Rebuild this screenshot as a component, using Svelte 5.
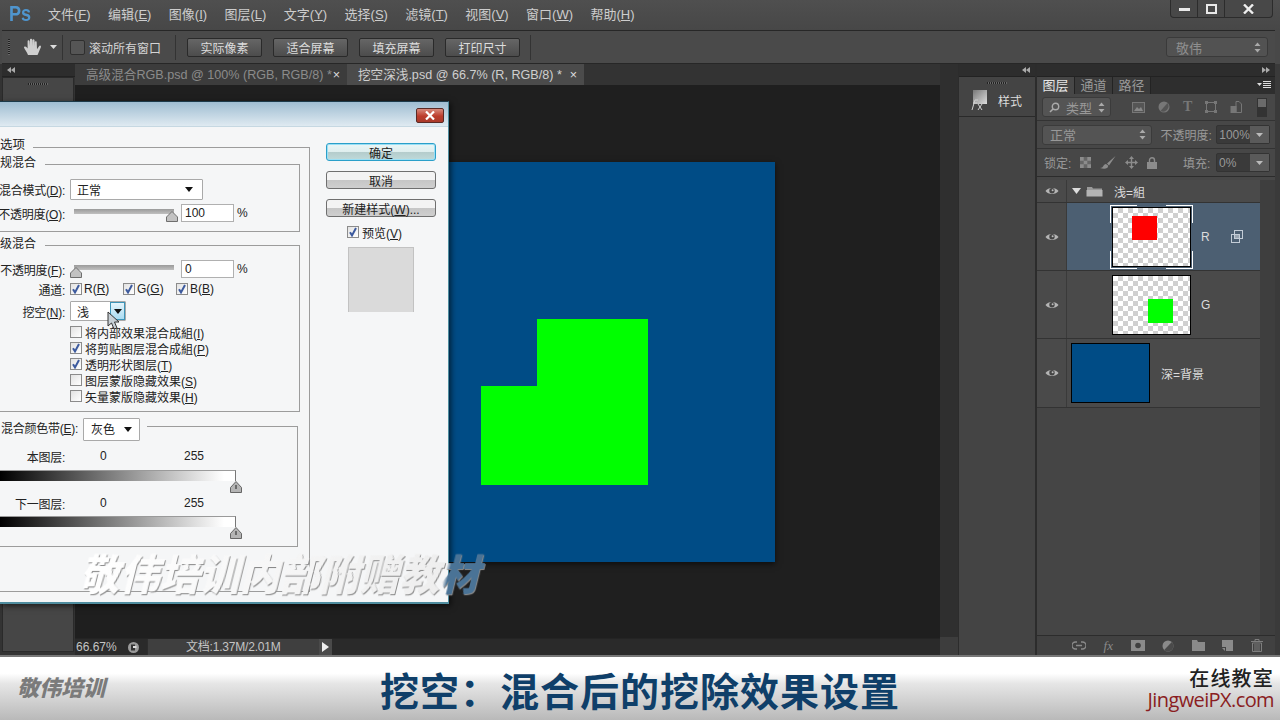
<script>
  const menus = [['文件','F'],['编辑','E'],['图像','I'],['图层','L'],['文字','Y'],['选择','S'],['滤镜','T'],['视图','V'],['窗口','W'],['帮助','H']];
  const optButtons = ['实际像素','适合屏幕','填充屏幕','打印尺寸'];
  const blendChecks = [
    ['将内部效果混合成組','I',false],
    ['将剪贴图层混合成組','P',true],
    ['透明形状图层','T',true],
    ['图层蒙版隐藏效果','S',false],
    ['矢量蒙版隐藏效果','H',false]
  ];
  const channels = ['R','G','B'];
</script>

{#snippet eye()}
  <svg class="eye" width="14" height="10" viewBox="0 0 14 10"><path d="M0.5 5C3 1 11 1 13.5 5C11 9 3 9 0.5 5Z" fill="#b5b5b5"/><circle cx="7" cy="4.8" r="2.7" fill="#444"/><circle cx="7.6" cy="4.2" r="1" fill="#bbb"/></svg>
{/snippet}
{#snippet check(on)}
  <span class="ck">{#if on}<svg width="10" height="10" viewBox="0 0 10 10"><path d="M2 5.2L4 8.4L8 1" fill="none" stroke="#3c5a9e" stroke-width="2"/></svg>{/if}</span>
{/snippet}
{#snippet handle()}
  <svg width="12" height="11" viewBox="0 0 12 11"><path d="M6 0.5L11.5 6V10.5H0.5V6Z" fill="#c2c2c2" stroke="#6e6e6e"/></svg>
{/snippet}
{#snippet gHandle()}
  <svg width="12" height="12" viewBox="0 0 12 12"><path d="M6 0.5L11.5 6.5V11.5H0.5V6.5Z" fill="#b4b4b4" stroke="#666"/><path d="M6 4V8" stroke="#222"/></svg>
{/snippet}
{#snippet updown()}
  <svg class="ud" width="7" height="11" viewBox="0 0 7 11"><path d="M3.5 0.5L6.5 4H0.5ZM3.5 10.5L0.5 7H6.5Z" fill="#aaa"/></svg>
{/snippet}

<div class="app">
  <header class="menubar">
    <span class="ps">Ps</span>
    <nav class="menus">
      {#each menus as m}<span>{m[0]}(<u>{m[1]}</u>)</span>{/each}
    </nav>
    <div class="winctl">
      <span><svg width="11" height="4" viewBox="0 0 11 4"><rect width="11" height="3" y="1" fill="#e8e8e8"/></svg></span>
      <span><svg width="11" height="10" viewBox="0 0 11 10"><rect x="1" y="1" width="9" height="8" fill="none" stroke="#e8e8e8" stroke-width="2"/></svg></span>
      <span class="x"><svg width="11" height="10" viewBox="0 0 11 10"><path d="M1 0.5L10 9.5M10 0.5L1 9.5" stroke="#eee" stroke-width="2.4"/></svg></span>
    </div>
  </header>

  <div class="options">
    <span class="grip"></span>
    <svg class="hand" width="20" height="20" viewBox="0 0 20 20"><path d="M5 18C4 15 1.5 12 1 10.5C1 9.3 2.6 9 3.6 10.3L4.6 11.5V4.2C4.6 3 6.5 3 6.6 4.2L7 9V2.6C7 1.4 9 1.4 9.1 2.6L9.4 9V3.2C9.5 2 11.4 2 11.5 3.2L11.8 9.5V5C11.9 4 13.7 4 13.7 5.2L14 12C15 11 16 8.5 17 8.4C18 8.4 18.2 9.4 17.8 10.4C16.5 13 15.5 16 14.5 18Z" fill="#cfcfcf"/></svg>
    <svg class="caret" width="7" height="4" viewBox="0 0 7 4"><path d="M0 0H7L3.5 4Z" fill="#ddd"/></svg>
    <i class="vsep s1"></i>
    <span class="optck"></span>
    <span class="optlabel">滚动所有窗口</span>
    <i class="vsep s2"></i>
    <div class="optbtns">
      {#each optButtons as b}<button>{b}</button>{/each}
    </div>
    <i class="vsep s3"></i>
    <span class="workspace">敬伟{@render updown()}</span>
  </div>

  <div class="work">
    <aside class="tools">
      <div class="strip"><svg width="8" height="6" viewBox="0 0 8 6"><path d="M4 0V6L0 3ZM8 0V6L4 3Z" fill="#aaa"/></svg></div>
      <div class="toolbody"><span class="tgrip"></span></div>
    </aside>

    <main class="docs">
      <div class="tabs">
        <div class="tab t1">高级混合RGB.psd @ 100% (RGB, RGB/8) *<b>×</b></div>
        <div class="tab t2">挖空深浅.psd @ 66.7% (R, RGB/8) *<b>×</b></div>
        <div class="tabrest"></div>
      </div>
      <div class="canvas">
        <svg class="doc" width="533" height="400" viewBox="0 0 533 400">
          <rect width="533" height="400" fill="#004c86"/>
          <path d="M295 157H406V323H239V224H295Z" fill="#00ff00"/>
        </svg>
      </div>
      <div class="status">
        <span class="zoomv">66.67%</span>
        <span class="sicon"><svg width="11" height="11" viewBox="0 0 11 11"><circle cx="5.5" cy="5.5" r="5.5" fill="#9a9a9a"/><path d="M3 2.5H7V8.5H3Z" fill="#333"/><path d="M5 4H8.5V6H5Z" fill="#ddd"/></svg></span>
        <span class="sdoc">文档:1.37M/2.01M</span>
        <span class="sarrow"><svg width="7" height="10" viewBox="0 0 7 10"><path d="M0 0L7 5L0 10Z" fill="#eee"/></svg></span>
      </div>
    </main>

    <div class="vscroll"><span></span></div>

    <aside class="dock1">
      <div class="strip end"><svg width="8" height="6" viewBox="0 0 8 6"><path d="M4 0V6L0 3ZM8 0V6L4 3Z" fill="#aaa"/></svg></div>
      <span class="pgrip"></span>
      <div class="stylehead">
        <svg width="18" height="22" viewBox="0 0 18 22"><defs><linearGradient id="fxg" x1="0" y1="0" x2="1" y2="1"><stop offset="0" stop-color="#777"/><stop offset="1" stop-color="#ddd"/></linearGradient></defs><rect x="3" y="1" width="14" height="14" fill="url(#fxg)"/><path d="M2 21L5 11H8M3 14H7M8 15L12 21M12 15L8 21" fill="none" stroke="#cfcfcf" stroke-width="1"/></svg>
        <span>样式</span>
      </div>
    </aside>

    <aside class="dock2">
      <div class="strip end"><svg width="8" height="6" viewBox="0 0 8 6"><path d="M0 0V6L4 3ZM4 0V6L8 3Z" fill="#aaa"/></svg></div>
      <div class="ptabs">
        <span class="on">图层</span><span>通道</span><span>路径</span>
        <svg class="pmenu" width="14" height="8" viewBox="0 0 14 8"><path d="M0 2H5L2.5 5Z" fill="#ddd"/><path d="M6 .5H14M6 2.5H14M6 4.500H14M6 6.500H14" stroke="#ddd"/></svg>
      </div>
      <div class="prow filter">
        <span class="psel s-type"><svg width="11" height="11" viewBox="0 0 11 11"><circle cx="6.500" cy="4.500" r="3.200" fill="none" stroke="#aaa" stroke-width="1.400"/><path d="M4 7L1 10" stroke="#aaa" stroke-width="1.600"/></svg>类型{@render updown()}</span>
        <div class="ficons">
          <svg width="13" height="11" viewBox="0 0 13 11"><rect x=".5" y=".5" width="12" height="10" fill="#555" stroke="#777"/><path d="M2 9L5 5L7 7L9 5L11 9Z" fill="#888"/></svg>
          <svg width="12" height="12" viewBox="0 0 12 12"><circle cx="6" cy="6" r="5.500" fill="#777"/><path d="M9.500 2L2.500 10A5.500 5.500 0 0 0 9.500 2Z" fill="#555"/></svg>
          <span class="ft">T</span>
          <svg width="12" height="12" viewBox="0 0 12 12"><rect x="1.500" y="1.500" width="9" height="9" fill="none" stroke="#777"/><path d="M0 0h3v3H0zM9 0h3v3H9zM0 9h3v3H0zM9 9h3v3H9z" fill="#777"/></svg>
          <svg width="12" height="12" viewBox="0 0 12 12"><path d="M6 .5H9L11.500 3V11.500H6Z" fill="none" stroke="#777"/><rect x=".5" y="5" width="6" height="7" fill="#777"/></svg>
        </div>
        <span class="ftoggle"></span>
      </div>
      <div class="prow mode">
        <span class="psel s-mode">正常{@render updown()}</span>
        <span class="plabel">不透明度:</span>
        <span class="pnum">100%<em><svg width="7" height="4" viewBox="0 0 7 4"><path d="M0 0H7L3.500 4Z" fill="#bbb"/></svg></em></span>
      </div>
      <div class="prow lock">
        <span class="lk">锁定:</span>
        <div class="licons">
          <svg width="11" height="11" viewBox="0 0 11 11"><rect width="11" height="11" fill="#666"/><path d="M0 0h3.700v3.700H0zM7.300 0H11v3.700H7.300zM3.700 3.700h3.600v3.600H3.700zM0 7.300h3.700V11H0zM7.300 7.300H11V11H7.300z" fill="#8c8c8c"/></svg>
          <svg width="16" height="13" viewBox="0 0 16 13"><path d="M15.500 0L7 7.500L9 9.500ZM6 8C3 8 4 12 0 12C4 13.500 9 13 8 9.500Z" fill="#8c8c8c"/></svg>
          <svg width="13" height="13" viewBox="0 0 13 13"><path d="M6.500 0L9 3H7.200V5.800H10V4L13 6.500L10 9V7.200H7.200V10H9L6.500 13L4 10H5.800V7.200H3V9L0 6.500L3 4V5.800H5.800V3H4Z" fill="#8c8c8c"/></svg>
          <svg width="10" height="12" viewBox="0 0 10 12"><path d="M2.500 5V3.200A2.500 2.500 0 0 1 7.500 3.200V5" fill="none" stroke="#8c8c8c" stroke-width="1.400"/><rect y="5" width="10" height="7" fill="#8c8c8c"/></svg>
        </div>
        <span class="plabel fill">填充:</span>
        <span class="pnum">0%<em><svg width="7" height="4" viewBox="0 0 7 4"><path d="M0 0H7L3.500 4Z" fill="#bbb"/></svg></em></span>
      </div>

      <div class="listwrap">
        <div class="list">
          <div class="lrow group">
            <span class="eyec">{@render eye()}</span>
            <svg class="gtri" width="9" height="6" viewBox="0 0 9 6"><path d="M0 0H9L4.500 6Z" fill="#ddd"/></svg>
            <svg class="gfolder" width="17" height="12" viewBox="0 0 17 12"><path d="M1 2H6L7 3.500H16V5H1Z" fill="#999"/><path d="M0.500 5H16.500V11.500H0.500Z" fill="#b4b4b4"/></svg>
            <span class="gname">浅=組</span>
          </div>
          <div class="lrow sel">
            <span class="eyec">{@render eye()}</span>
            <div class="thumbframe"><div class="thumb"><i class="red"></i></div></div>
            <span class="lname rn">R</span>
            <svg class="clip" width="12" height="13" viewBox="0 0 12 13"><rect x="3.500" y=".5" width="8" height="8" fill="none" stroke="#c3ccd6"/><rect x=".5" y="4.500" width="8" height="8" fill="none" stroke="#c3ccd6"/><rect x="4" y="5" width="4" height="3" fill="#9aa6b2"/></svg>
          </div>
          <div class="lrow">
            <span class="eyec">{@render eye()}</span>
            <div class="thumb gth"><i class="green"></i></div>
            <span class="lname gn">G</span>
          </div>
          <div class="lrow bg">
            <span class="eyec">{@render eye()}</span>
            <div class="thumb blue"></div>
            <span class="lname bn">深=背景</span>
          </div>
        </div>
        <div class="lscroll"></div>
      </div>

      <div class="pfoot">
        <svg width="14" height="9" viewBox="0 0 14 9"><path d="M5 1H3.500a3.500 3.500 0 0 0 0 7H5M9 1h1.500a3.500 3.500 0 0 1 0 7H9M4 4.500H10" fill="none" stroke="#8a8a8a" stroke-width="1.400"/></svg>
        <span class="fxf">fx</span>
        <svg width="14" height="11" viewBox="0 0 14 11"><rect width="14" height="11" fill="#8a8a8a"/><circle cx="7" cy="5.500" r="2.800" fill="#3f3f3f"/></svg>
        <svg width="12" height="12" viewBox="0 0 12 12"><circle cx="6" cy="6" r="5.500" fill="#8a8a8a"/><path d="M9.800 2L2.200 10A5.500 5.500 0 0 0 9.800 2Z" fill="#4a4a4a"/></svg>
        <svg width="13" height="11" viewBox="0 0 13 11"><path d="M0 0H5L6 2H13V11H0Z" fill="#8a8a8a"/></svg>
        <svg width="11" height="11" viewBox="0 0 11 11"><path d="M0 0H11V11H4V7H0Z" fill="#8a8a8a"/><path d="M0 8H3V11Z" fill="#8a8a8a"/></svg>
        <svg width="12" height="13" viewBox="0 0 12 13"><path d="M0 2.500H12M4 2V.5H8V2M1.500 4H10.500V12.500H1.500ZM4 5V12M6 5V12M8 5V12" fill="none" stroke="#7e7e7e"/></svg>
      </div>
    </aside>
  </div>

  <footer class="banner">
    <span class="blogo">敬伟培训</span>
    <h1>挖空：混合后的挖除效果设置</h1>
    <div class="bright"><span class="b1">在线教室</span><span class="b2">JingweiPX.com</span></div>
  </footer>

  <section class="dialog">
    <div class="dtitle"><span class="dclose"><svg width="10" height="9" viewBox="0 0 10 9"><path d="M1 .5L9 8.500M9 .5L1 8.500" stroke="#fff" stroke-width="2.200"/></svg></span></div>
    <div class="dbody">
      <div class="dleft">
        <div class="outer">
          <div class="legend lg0">选项</div>
          <div class="grp g1">
            <div class="legend lg1">规混合</div>
            <div class="row r1">
              <span class="lbl">混合模式(<u>D</u>):</span>
              <span class="sel-w sw1">正常<svg width="8" height="5" viewBox="0 0 8 5"><path d="M0 0H8L4 5Z" fill="#111"/></svg></span>
            </div>
            <div class="row r2">
              <span class="lbl">不透明度(<u>O</u>):</span>
              <span class="slider end">{@render handle()}</span>
              <span class="numbox">100</span><span class="pct">%</span>
            </div>
          </div>
          <div class="grp g2">
            <div class="legend lg1">级混合</div>
            <div class="row r2 r3">
              <span class="lbl">不透明度(<u>F</u>):</span>
              <span class="slider start">{@render handle()}</span>
              <span class="numbox">0</span><span class="pct">%</span>
            </div>
            <div class="row r4">
              <span class="lbl">通道:</span>
              {#each channels as c}
                <span class="chan">{@render check(true)}<span>{c}(<u>{c}</u>)</span></span>
              {/each}
            </div>
            <div class="row r5">
              <span class="lbl">挖空(<u>N</u>):</span>
              <span class="sel-w sw2">浅<span class="dropbtn"><svg width="8" height="5" viewBox="0 0 8 5"><path d="M0 0H8L4 5Z" fill="#111"/></svg></span></span>
            </div>
            <div class="checks">
              {#each blendChecks as c}
                <div class="ckrow">{@render check(c[2])}<span>{c[0]}(<u>{c[1]}</u>)</span></div>
              {/each}
            </div>
          </div>
          <div class="grp g3">
            <div class="legend lg3">
              <span class="lbl wide">混合颜色带(<u>E</u>):</span>
              <span class="sel-w sw3">灰色<svg width="8" height="5" viewBox="0 0 8 5"><path d="M0 0H8L4 5Z" fill="#111"/></svg></span>
            </div>
            <div class="row r6"><span class="lbl">本图层:</span><span class="v0">0</span><span class="v255">255</span></div>
            <div class="gbar"></div>
            <div class="gh">{@render gHandle()}</div>
            <div class="row r7"><span class="lbl">下一图层:</span><span class="v0">0</span><span class="v255">255</span></div>
            <div class="gbar"></div>
            <div class="gh">{@render gHandle()}</div>
          </div>
        </div>
      </div>
      <div class="dright">
        <button class="dbtn primary">确定</button>
        <button class="dbtn">取消</button>
        <button class="dbtn">新建样式(<u>W</u>)...</button>
        <div class="preview">{@render check(true)}<span>预览(<u>V</u>)</span></div>
        <div class="swatch"></div>
      </div>
    </div>
  </section>

  <svg class="cursor" width="14" height="20" viewBox="0 0 14 20"><path d="M1 1V15L4.500 12L7 18L10 17L7.500 11H12Z" fill="#c8d0d6" stroke="#333"/></svg>
  <div class="wm">敬伟培训内部附赠教材</div>
</div>

<style>
  :global(body){margin:0;background:#222;}
  .app{position:relative;width:1280px;height:720px;overflow:hidden;display:flex;flex-direction:column;background:#484848;color:#d0d0d0;font:12px "Liberation Sans","Noto Sans CJK SC",sans-serif;}
  u{text-decoration:underline;}

  .menubar{height:30px;flex:none;display:flex;align-items:flex-start;background:linear-gradient(#4f4f4f,#474747);}
  .ps{margin:0 0 0 9px;width:39px;font:bold 22px/27px "Liberation Sans",sans-serif;color:#4f95ce;transform:scaleX(.82);transform-origin:left;}
  .menus{display:flex;gap:17.4px;padding-top:6px;font-size:13px;line-height:17px;color:#cdcdcd;}
  .winctl{margin-left:auto;margin-right:7px;display:flex;height:17px;border:1px solid #2c2c2c;border-top:0;border-radius:0 0 4px 4px;background:#484848;}
  .winctl span{width:26px;display:flex;align-items:center;justify-content:center;border-right:1px solid #2c2c2c;}
  .winctl .x{width:47px;border:0;}

  .options{height:34px;flex:none;display:flex;align-items:center;margin:0 5px 0 2px;border-top:1px solid #272727;border-bottom:1px solid #272727;background:#4a4a4a;box-sizing:border-box;}
  .grip{width:2px;height:16px;margin-left:6px;background:repeating-linear-gradient(#222 0 1px,#666 1px 2px);}
  .hand{margin-left:13px;}
  .caret{margin-left:7px;}
  .vsep{width:1px;height:25px;background:#333;}
  .s1{margin-left:5px;}
  .optck{width:13px;height:13px;margin-left:7px;border:1px solid #2f2f2f;border-radius:2px;background:#555;}
  .optlabel{margin-left:4px;width:71px;font-size:12px;color:#d5d5d5;white-space:nowrap;}
  .s2{margin-left:15px;}
  .optbtns{display:flex;gap:11px;margin-left:11px;}
  .optbtns button{width:75px;height:19px;padding:0;font:12px "Liberation Sans","Noto Sans CJK SC",sans-serif;color:#ddd;border:1px solid #2a2a2a;border-radius:2px;background:linear-gradient(#666,#4c4c4c);}
  .s3{margin-left:10px;}
  .workspace{margin-left:auto;margin-right:7px;width:102px;height:20px;box-sizing:border-box;padding:0 6px 0 9px;display:flex;align-items:center;justify-content:space-between;color:#8f8f8f;font-size:13px;border:1px solid #3a3a3a;border-radius:3px;background:#525252;}

  .work{flex:1;min-height:0;display:flex;border-bottom:2px solid #777;background:#3a3a3a;}
  .strip{height:12px;display:flex;align-items:center;padding:0 5px;background:#2d2d2d;border-bottom:1px solid #222;flex:none;}
  .strip.end{justify-content:flex-end;}
  .tools{width:75px;flex:none;display:flex;flex-direction:column;padding-left:2px;box-sizing:border-box;background:#333;}
  .toolbody{flex:1;margin-right:1px;margin-bottom:3px;background:#464646;border:1px solid #2a2a2a;display:flex;justify-content:center;}
  .tgrip{width:20px;height:2px;margin:5px 0 0;background:repeating-linear-gradient(90deg,#222 0 1px,#666 1px 2px);}

  .docs{flex:1;min-width:0;display:flex;flex-direction:column;background:#1f1f1f;}
  .tabs{height:21px;flex:none;display:flex;background:#2e2e2e;}
  .tab{box-sizing:border-box;line-height:22px;padding-left:11px;font-size:12.6px;white-space:nowrap;display:flex;justify-content:space-between;padding-right:7px;}
  .tab b{font-weight:400;color:#ddd;}
  .t1{width:272px;background:#3c3c3c;color:#8b8b8b;}
  .t2{width:237px;background:#4b4b4b;color:#cfcfcf;}
  .tabrest{flex:1;background:#333;}
  .canvas{flex:1;min-height:0;display:flex;align-items:center;justify-content:center;padding-left:1px;background:#1f1f1f;}
  .doc{display:block;box-shadow:0 2px 6px rgba(0,0,0,.6);}
  .status{height:16px;flex:none;display:flex;align-items:center;background:#2a2a2a;border-top:1px solid #242424;font-size:12px;color:#c4c4c4;}
  .zoomv{width:52px;padding-left:1px;}
  .sicon{width:19px;height:100%;display:flex;align-items:center;}
  .sdoc{width:172px;height:100%;box-sizing:border-box;padding-left:38px;background:#3f3f3f;line-height:16px;border-left:1px solid #2d2d2d;letter-spacing:-.2px;}
  .sarrow{width:13px;height:100%;background:#4a4a4a;display:flex;align-items:center;justify-content:center;}

  .vscroll{width:18px;flex:none;display:flex;align-items:flex-end;background:#2f2f2f;}
  .vscroll span{width:100%;height:18px;background:#3d3d3d;}

  .dock1{width:79px;flex:none;display:flex;flex-direction:column;border-right:2px solid #2c2c2c;box-sizing:border-box;background:#444;border-left:1px solid #2c2c2c;}
  .pgrip{width:20px;height:2px;margin:5px auto 0;flex:none;background:repeating-linear-gradient(90deg,#222 0 1px,#666 1px 2px);}
  .stylehead{height:33px;box-sizing:border-box;border-bottom:1px solid #2a2a2a;display:flex;align-items:center;padding:0 0 0 11px;gap:10px;color:#ddd;font-size:12px;}

  .dock2{width:238px;flex:none;margin-right:5px;display:flex;flex-direction:column;background:#474747;}
  .ptabs{height:17px;flex:none;display:flex;align-items:stretch;background:#2e2e2e;}
  .ptabs span{width:37px;text-align:center;font-size:13px;line-height:18px;color:#999;border-right:1px solid #232323;background:#3a3a3a;}
  .ptabs .on{background:#474747;color:#e6e6e6;}
  .pmenu{margin:4px 4px 0 auto;}
  .prow{flex:none;display:flex;align-items:center;box-sizing:border-box;padding:0 5px;border-bottom:1px solid #333;}
  .filter{height:27px;}
  .mode{height:28px;}
  .lock{height:28px;border-bottom:1px solid #2c2c2c;}
  .psel{height:20px;box-sizing:border-box;display:flex;align-items:center;background:#545454;border:1px solid #3b3b3b;border-radius:3px;padding:0 5px 0 7px;font-size:13px;color:#999;}
  .psel .ud{margin-left:auto;}
  .s-type{width:69px;gap:6px;padding-left:6px;}
  .s-mode{width:110px;}
  .ficons{margin-left:21px;display:flex;align-items:center;gap:13px;}
  .ft{font:bold 14px "Liberation Serif",serif;color:#777;line-height:14px;}
  .ftoggle{margin-left:auto;margin-right:3px;width:8px;height:17px;background:linear-gradient(#6a6a6a 50%,#333 50%);border:1px solid #333;}
  .plabel{margin-left:9px;font-size:12px;color:#999;white-space:nowrap;width:56px;}
  .pnum{margin-left:auto;margin-right:0;width:54px;height:19px;box-sizing:border-box;display:flex;align-items:center;justify-content:space-between;padding-left:2px;background:#3a3a3a;border:1px solid #333;border-radius:2px;color:#999;font-size:12px;}
  .pnum em{width:19px;height:100%;display:flex;align-items:center;justify-content:center;background:#5a5a5a;}
  .lk{color:#999;width:30px;margin-left:2px;font-size:12px;white-space:nowrap;}
  .licons{display:flex;align-items:center;gap:9px;margin-left:6px;}
  .fill{width:28px;margin-left:auto;margin-right:5px;}
  .lock .pnum{margin-left:0;}

  .listwrap{flex:1;min-height:0;display:flex;margin-top:3px;}
  .list{width:223px;flex:none;background:#454545;}
  .lscroll{flex:1;background:#3e3e3e;}
  .lrow{height:68px;box-sizing:border-box;display:flex;align-items:center;background:#4a4a4a;border-bottom:1px solid #333;color:#dcdcdc;}
  .lrow.group{height:23px;}
  .lrow.bg{height:69px;}
  .eyec{width:30px;height:100%;flex:none;box-sizing:border-box;display:flex;align-items:center;justify-content:center;border-right:1px solid #3a3a3a;background:#4a4a4a;}
  .gtri{margin-left:5px;}
  .gfolder{margin-left:5px;}
  .gname{margin-left:11px;}
  .sel{background:#4c5f72;}
  .thumb{width:79px;height:60px;box-sizing:border-box;border:1px solid #000;flex:none;background:repeating-conic-gradient(#d0d0d0 0 25%,#fff 0 50%) 0 0/10px 10px;display:flex;}
  .thumbframe{margin-left:43px;padding:2px;flex:none;background:
    linear-gradient(#fff,#fff) 0 0/27px 1px,linear-gradient(#fff,#fff) 100% 0/27px 1px,
    linear-gradient(#fff,#fff) 0 100%/27px 1px,linear-gradient(#fff,#fff) 100% 100%/27px 1px,
    linear-gradient(#fff,#fff) 0 0/1px 18px,linear-gradient(#fff,#fff) 100% 0/1px 18px,
    linear-gradient(#fff,#fff) 0 100%/1px 18px,linear-gradient(#fff,#fff) 100% 100%/1px 18px;background-repeat:no-repeat;}
  .red{width:25px;height:24px;margin:8px 0 0 19px;background:#f00;}
  .gth{margin-left:45px;}
  .green{width:25px;height:24px;margin:23px 0 0 35px;background:#0f0;}
  .blue{margin-left:4px;background:#004c86;}
  .lname{font-size:12px;}
  .rn{margin-left:8px;}
  .gn{margin-left:10px;}
  .bn{margin-left:11px;}
  .clip{margin-left:21px;}
  .pfoot{height:19px;flex:none;display:flex;align-items:center;justify-content:space-between;padding:0 12px 0 35px;background:#414141;border-top:1px solid #2c2c2c;}
  .fxf{font:italic 13px "Liberation Serif",serif;color:#8a8a8a;}

  .banner{height:63px;flex:none;box-sizing:border-box;display:flex;align-items:center;background:linear-gradient(#fff 0,#fff 26%,#e6e6e6 42%,#b9b9b9 100%);}
  .blogo{width:376px;padding-left:17px;box-sizing:border-box;font:italic 900 22px "Noto Sans CJK SC",sans-serif;color:#7b7b7b;margin-top:-5px;white-space:nowrap;}
  h1{margin:2px 0 0 4px;font:700 39px/1 "Noto Sans CJK SC",sans-serif;color:#0f3f69;letter-spacing:1px;white-space:nowrap;}
  .bright{margin-left:auto;margin-right:6px;display:flex;flex-direction:column;align-items:flex-end;}
  .b1{font:500 20px/22px "Noto Sans CJK SC",sans-serif;letter-spacing:1.2px;color:#222;}
  .b2{font:20px/21px "Open Sans",sans-serif;color:#8a1d22;letter-spacing:-.6px;}

  .dialog{position:absolute;left:0;top:101px;width:449px;height:503px;box-sizing:border-box;overflow:hidden;display:flex;flex-direction:column;background:#f5f6f7;border-top:1px solid #1c3a4a;border-right:1px solid #4f8d9f;border-bottom:2px solid #4f8d9f;color:#222;font-size:12px;box-shadow:2px 2px 6px rgba(0,0,0,.6);}
  .dtitle{height:25px;flex:none;box-sizing:border-box;display:flex;justify-content:flex-end;padding:6px 4px 0 0;background:linear-gradient(#9fbdd2,#dfeaf1);border-bottom:1px solid #c6d8e2;}
  .dclose{width:28px;height:15px;display:flex;align-items:center;justify-content:center;box-sizing:border-box;border:1px solid #5a2a25;border-radius:2px;background:linear-gradient(#d88a7c,#bc3c2c 55%,#a93a2a);}
  .dbody{flex:1;display:flex;min-height:0;}
  .dleft{width:360px;margin-left:-50px;flex:none;}
  .dright{width:110px;margin:16px 0 0 16px;display:flex;flex-direction:column;flex:none;}

  .outer{margin-top:20px;height:445px;box-sizing:border-box;border:1px solid #9c9c9c;}
  .legend{width:fit-content;height:16px;line-height:16px;background:#f5f6f7;white-space:nowrap;}
  .lg0{margin:-11px 0 0 49px;padding-right:8px;font-size:12.5px;}
  .lg1{margin:-10px 0 0 38px;padding-right:9px;font-size:12px;}
  .grp{box-sizing:border-box;margin-left:10px;border:1px solid #9c9c9c;width:339px;}
  .g1{margin-top:11px;height:68px;}
  .g2{margin-top:13px;height:167px;}
  .g3{margin-top:14px;height:121px;width:337px;}
  .lg3{display:flex;height:23px;margin:-9px 0 0 -1px;padding-right:7px;align-items:stretch;}
  .row{display:flex;align-items:center;white-space:nowrap;}
  .lbl{width:103px;flex:none;margin-right:5px;text-align:right;letter-spacing:-.25px;}
  .wide{width:117px;line-height:23px;letter-spacing:-.25px;}
  .r1{margin-top:8px;height:21px;}
  .r2{margin-top:4px;height:18px;}
  .r3{margin-top:8px;}
  .r4{margin-top:3px;height:16px;}
  .r5{margin-top:4px;height:20px;}
  .sel-w{box-sizing:border-box;display:flex;align-items:center;justify-content:space-between;background:#fff;border:1px solid #a9a9a9;border-radius:1px;padding:0 9px 0 6px;}
  .sw1{width:133px;height:21px;}
  .sw2{width:56px;height:20px;padding-right:0;}
  .sw3{width:57px;height:23px;padding:0 7px;}
  .dropbtn{width:15px;height:18px;display:flex;align-items:center;justify-content:center;background:linear-gradient(#e4f4fb,#a9dcf2);border:1px solid #3d94b8;box-sizing:border-box;}
  .slider{width:108px;height:18px;display:flex;align-items:flex-end;flex:none;background:linear-gradient(#9a9a9a,#c0c0c0) 4px 5px/100px 5px no-repeat;}
  .slider.end{justify-content:flex-end;}
  .numbox{box-sizing:border-box;width:53px;height:18px;line-height:17px;background:#fff;border:1px solid #b0b0b0;padding-left:3px;flex:none;margin-left:3px;}
  .pct{margin-left:3px;}
  .ck{display:inline-flex;align-items:center;justify-content:center;box-sizing:border-box;width:12px;height:12px;border:1px solid #8b8b8b;background:linear-gradient(135deg,#e2e2e2,#fff);flex:none;}
  .chan{display:flex;align-items:center;gap:2px;width:53px;}
  .checks{margin:3px 0 0 108px;}
  .ckrow{height:16px;display:flex;align-items:center;gap:3px;white-space:nowrap;}
  .r6{margin-top:7px;height:16px;}
  .r7{margin-top:3px;height:14px;}
  .v0{width:84px;margin-left:30px;flex:none;}
  .gbar{margin-top:6px;width:274px;height:11px;box-sizing:border-box;border-top:1px solid #9a9a9a;border-right:1px solid #777;background:linear-gradient(90deg,#000 14%,#fff 96%);}
  .gh{width:280px;height:13px;display:flex;justify-content:flex-end;margin-top:-1px;}
  .gh svg{margin-top:1px;}
  .dbtn{width:110px;height:18px;padding:0;margin-bottom:10px;font:12px "Liberation Sans","Noto Sans CJK SC",sans-serif;color:#222;border:1px solid #6f6f6f;border-radius:3px;background:linear-gradient(#f3f3f3 0,#f3f3f3 48%,#c6c6c6 52%,#cfcfcf);}
  .primary{border:1px solid #2b9fc9;background:linear-gradient(#eaf6f7 0,#dfeeee 48%,#b4cccc 52%,#bfdada);box-shadow:inset 0 0 0 1px #9adff5;}
  .preview{display:flex;align-items:center;gap:3px;padding-left:21px;height:12px;margin-top:-1px;white-space:nowrap;}
  .swatch{width:66px;height:65px;margin:9px 0 0 22px;background:#dadada;box-sizing:border-box;border:1px solid #c2c2c2;border-bottom:0;}

  .cursor{position:absolute;left:107px;top:311px;}
  .wm{position:absolute;left:84px;top:546px;width:420px;height:52px;font:900 40px/52px "Noto Sans CJK SC",sans-serif;white-space:nowrap;transform:skewX(-14deg) scaleY(1.05);background:linear-gradient(90deg,#fff 0,#eee 86%,#4a7396 87%,#4a7396 100%);-webkit-background-clip:text;background-clip:text;color:transparent;filter:drop-shadow(1px 1px 0 #8a8a8a);}
</style>
